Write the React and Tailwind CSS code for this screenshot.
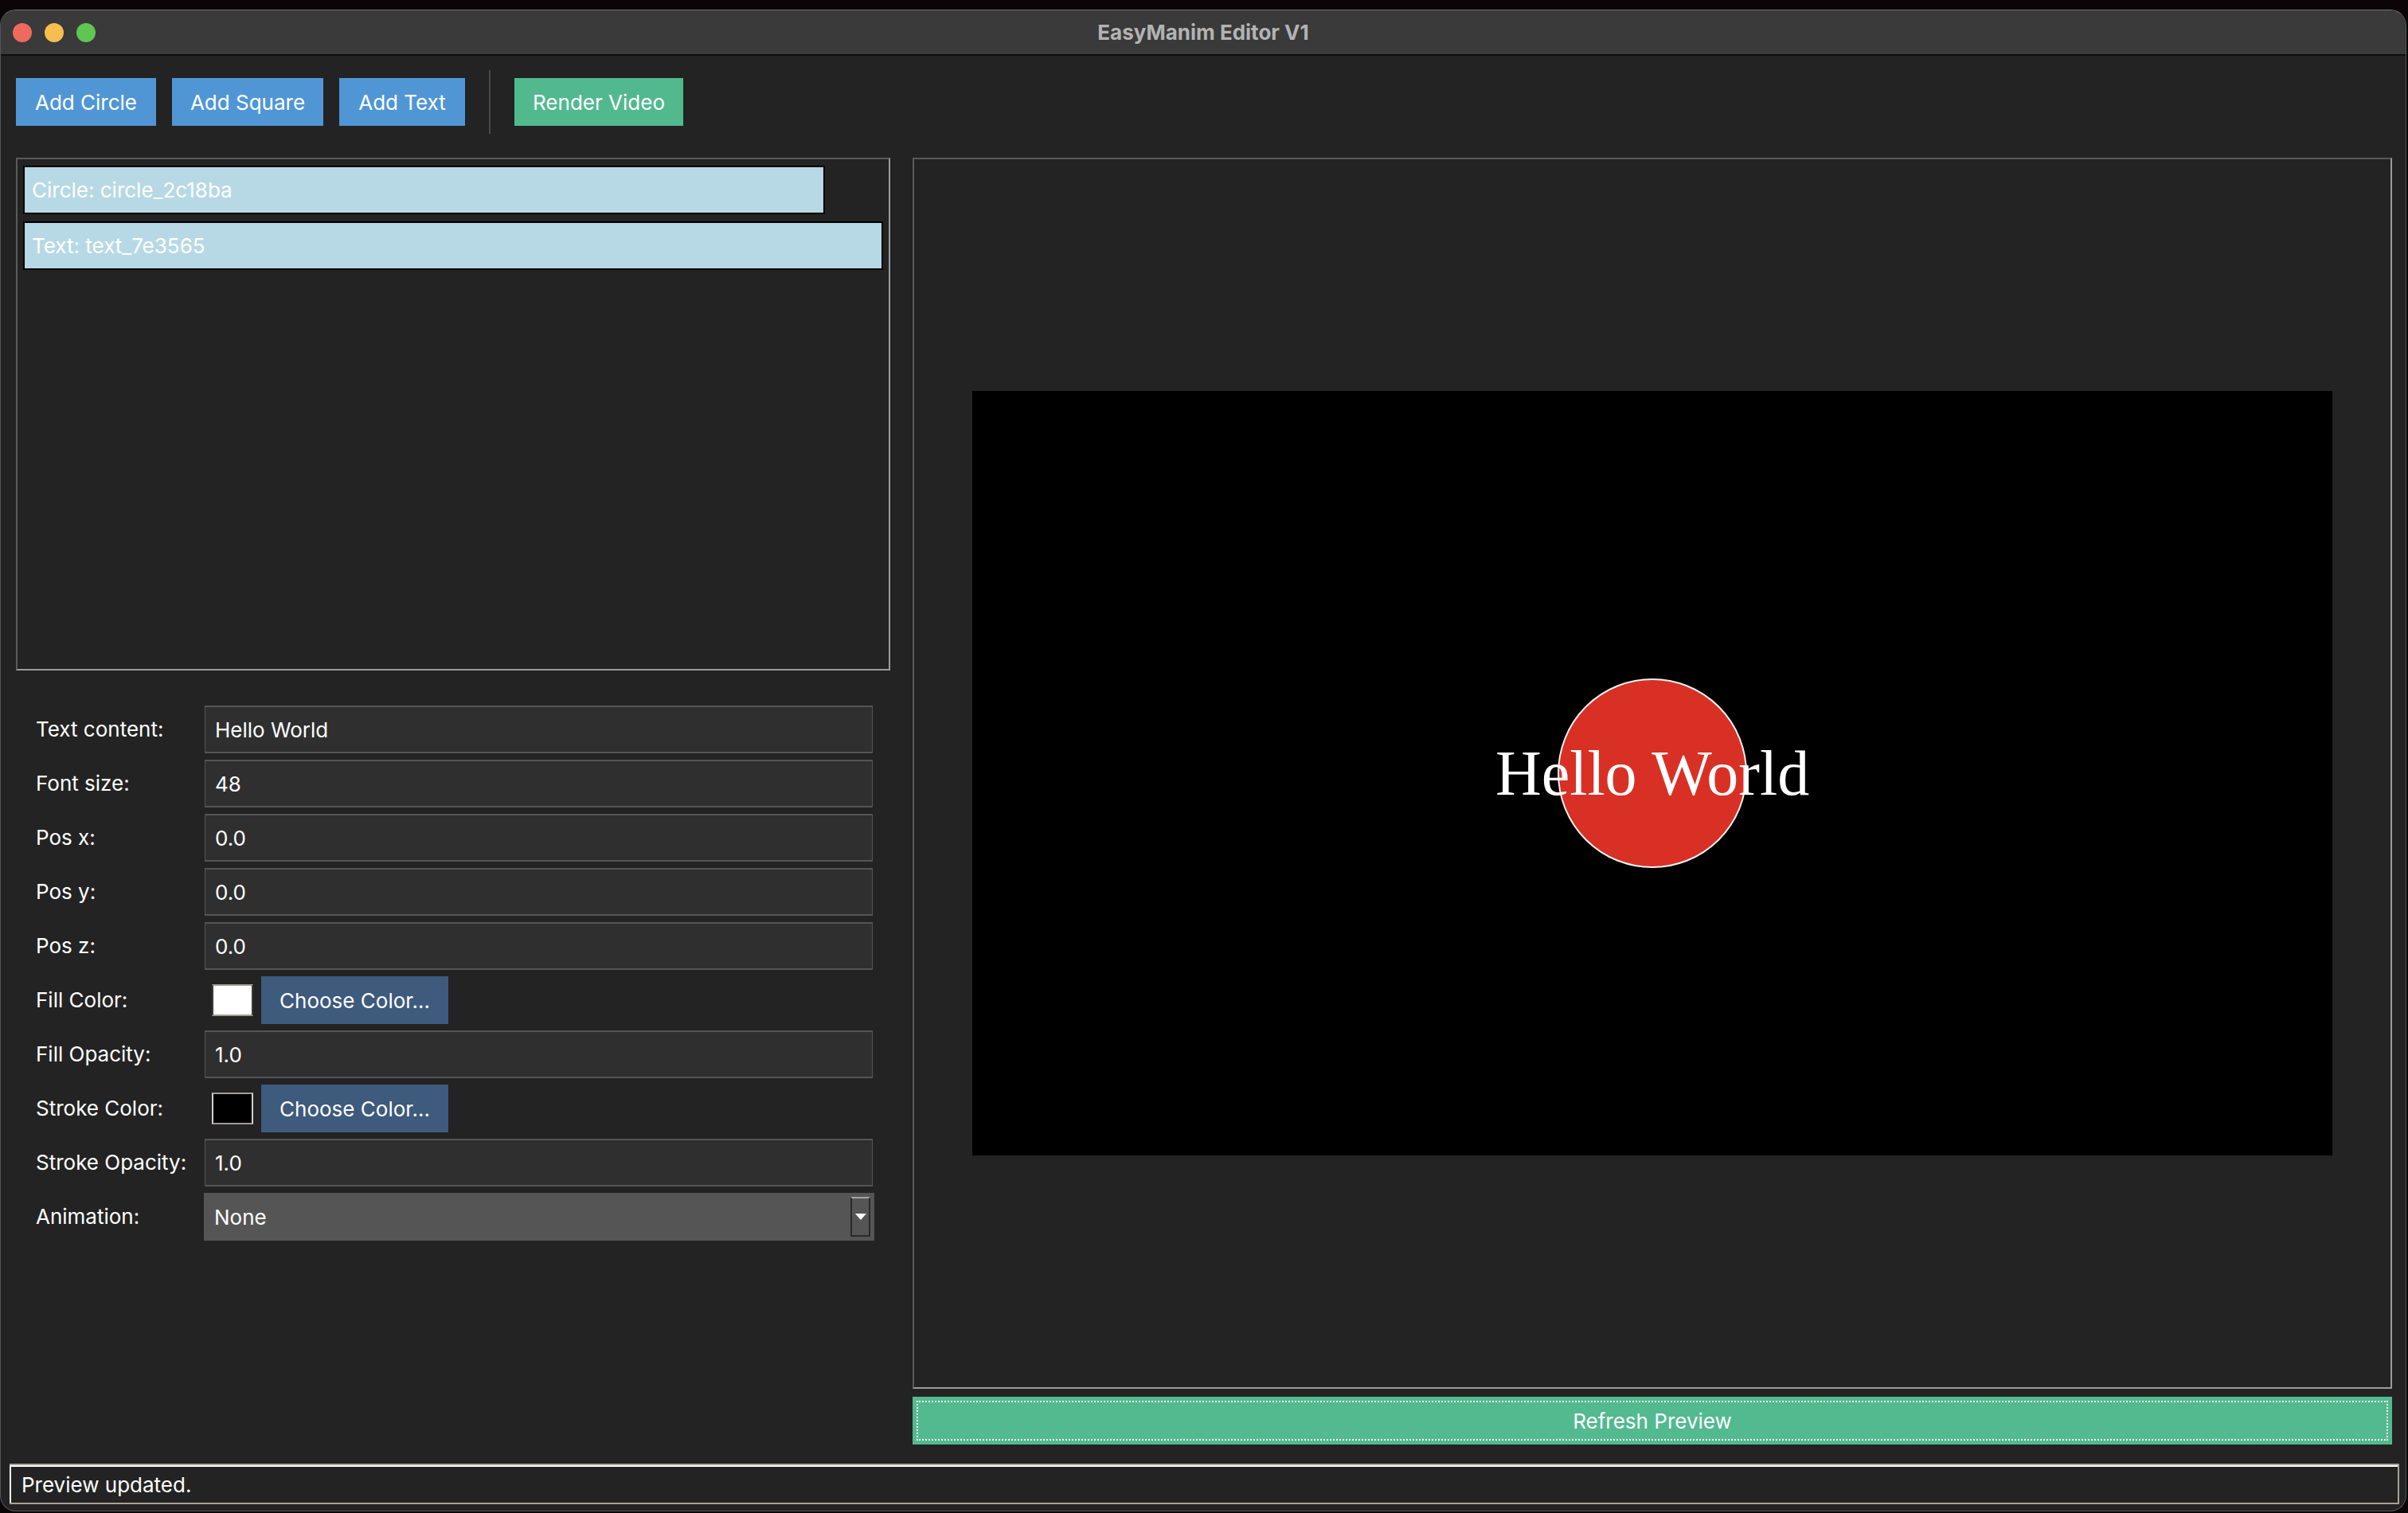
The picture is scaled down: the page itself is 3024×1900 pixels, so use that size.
import React from "react";

const UI = "font-['Inter',sans-serif]";

function Label({ children }) {
  return (
    <div className="w-[237px] shrink-0 pl-[25px] text-[26px] leading-none text-white">
      {children}
    </div>
  );
}

function Field({ label, value }) {
  return (
    <div className="flex h-[60px] items-center">
      <Label>{label}</Label>
      <div className="flex h-[60px] w-[839px] items-center border-x border-y-2 border-[#555555] bg-[#2f2f2f] pl-[12px] text-[26px] text-white">
        {value}
      </div>
    </div>
  );
}

function ColorRow({ label, swatch }) {
  return (
    <div className="flex h-[60px] items-center">
      <Label>{label}</Label>
      {swatch === "white" ? (
        <div className="ml-[9px] h-[40px] w-[52px] border-2 border-x-[#3a3a3a] border-y-[#a09d94] bg-white" />
      ) : (
        <div className="ml-[9px] h-[40px] w-[52px] border-2 border-x-[#d0d0d0] border-y-[#a09d94] bg-black" />
      )}
      <button className="ml-[10px] flex h-[60px] w-[235px] items-center justify-center bg-[#3e5a7d] text-[26px] text-white">
        Choose Color...
      </button>
    </div>
  );
}

function ToolButton({ children, className }) {
  return (
    <button
      className={
        "flex h-[60px] items-center justify-center text-[26px] text-white " +
        className
      }
    >
      {children}
    </button>
  );
}

export default function App() {
  return (
    <div className={"h-[1900px] w-[3024px] overflow-hidden bg-[#0b0508] pt-[12px] " + UI}>
      <div className="flex h-[1886px] w-[3022px] flex-col overflow-hidden rounded-[20px] border border-[#555555] border-t-[#737373] bg-[#232323]">
        {/* Title bar */}
        <div className="grid h-[57px] shrink-0 grid-cols-[1fr_auto_1fr] items-center border-b-2 border-[#0e0e0e] bg-[#3a3a3a]">
          <div className="flex items-center gap-[16px] pl-[15px]">
            <div className="h-[24px] w-[24px] rounded-full bg-[#ee6a5f]" />
            <div className="h-[24px] w-[24px] rounded-full bg-[#f5be4f]" />
            <div className="h-[24px] w-[24px] rounded-full bg-[#61c554]" />
          </div>
          <div className="text-[26px] font-bold text-[#b3b3b3]">EasyManim Editor V1</div>
          <div />
        </div>

        {/* Toolbar */}
        <div className="flex h-[98px] shrink-0 items-center pl-[19px] pt-[18px]">
          <ToolButton className="w-[176px] bg-[#5096d5]">Add Circle</ToolButton>
          <ToolButton className="ml-[20px] w-[190px] bg-[#5096d5]">Add Square</ToolButton>
          <ToolButton className="ml-[20px] w-[158px] bg-[#5096d5]">Add Text</ToolButton>
          <div className="ml-[30px] h-[80px] w-[2px] bg-[#4a4a4a]" />
          <ToolButton className="ml-[30px] w-[212px] bg-[#52b98f]">Render Video</ToolButton>
        </div>

        {/* Main */}
        <div className="mt-[30px] flex h-[1616px] shrink-0 gap-[28px] pl-[19px] pr-[17px]">
          {/* Left column */}
          <div className="flex w-[1098px] shrink-0 flex-col">
            <div className="flex h-[644px] flex-col gap-[9px] border-2 border-[#5a5a5a] border-b-[#9b9b9b] border-r-[#9b9b9b] px-[7px] pt-[8px]">
              <div className="flex h-[61px] w-[1007px] items-center border-2 border-black bg-[#b7d9e5] pl-[9px] text-[26px] text-white">
                Circle: circle_2c18ba
              </div>
              <div className="flex h-[61px] w-full items-center border-2 border-black bg-[#b7d9e5] pl-[9px] text-[26px] text-white">
                Text: text_7e3565
              </div>
            </div>

            <div className="mt-[44px] flex flex-col gap-[8px]">
              <Field label="Text content:" value="Hello World" />
              <Field label="Font size:" value="48" />
              <Field label="Pos x:" value="0.0" />
              <Field label="Pos y:" value="0.0" />
              <Field label="Pos z:" value="0.0" />
              <ColorRow label="Fill Color:" swatch="white" />
              <Field label="Fill Opacity:" value="1.0" />
              <ColorRow label="Stroke Color:" swatch="black" />
              <Field label="Stroke Opacity:" value="1.0" />
              <div className="flex h-[60px] items-center">
                <Label>Animation:</Label>
                <div className="-ml-px flex h-[60px] w-[842px] items-center justify-between bg-[#555555] pl-[13px] pr-[5px] text-[26px] text-white">
                  <span>None</span>
                  <div className="flex h-[50px] w-[25px] items-center justify-center border-2 border-[#2b2b2b] border-t-[#a5a5a5]">
                    <div className="h-0 w-0 border-x-[7px] border-t-[8px] border-x-transparent border-t-white" />
                  </div>
                </div>
              </div>
            </div>
          </div>

          {/* Right column */}
          <div className="flex w-[1858px] shrink-0 flex-col">
            <div className="flex h-[1546px] items-center justify-center border-2 border-[#5a5a5a] border-b-[#9b9b9b] border-r-[#9b9b9b]">
              <div className="flex h-[960px] w-[1708px] items-center justify-center bg-black">
                <div className="relative flex h-[238px] w-[238px] items-center justify-center">
                  <div className="h-[238px] w-[238px] rounded-full border-2 border-[#f2f2f2] bg-[#d93025]" />
                  <div className="absolute inset-0 flex items-center justify-center">
                    <span className="whitespace-nowrap font-['Liberation_Serif',serif] text-[80px] leading-none text-white">
                      Hello World
                    </span>
                  </div>
                </div>
              </div>
            </div>
            <button className="mt-[10px] h-[60px] w-full bg-[#53b98f] p-[5px]">
              <div className="flex h-full w-full items-center justify-center border-2 border-dotted border-white text-[26px] text-white">
                Refresh Preview
              </div>
            </button>
          </div>
        </div>

        {/* Status bar */}
        <div className="ml-[11px] mr-[8px] mt-[24px] h-[51px] shrink-0 border-2 border-l-0 border-[#a6a39a]">
          <div className="flex h-full items-center border-l-2 border-t-2 border-white pl-[13px] text-[26px] text-white">
            Preview updated.
          </div>
        </div>
      </div>
    </div>
  );
}
